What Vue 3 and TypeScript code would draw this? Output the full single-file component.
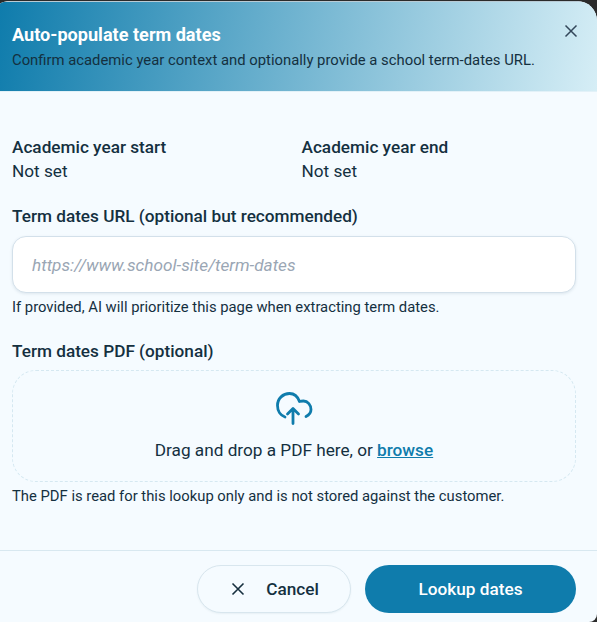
<script setup lang="ts">
const title = 'Auto-populate term dates'
</script>

<template>
  <div class="modal">
    <header class="head">
      <div>
        <h2>{{ title }}</h2>
        <p>Confirm academic year context and optionally provide a school term-dates URL.</p>
      </div>
      <button class="close" aria-label="Close">
        <svg width="16" height="16" viewBox="0 0 16 16"><path d="M2.5 2.5l11 11M13.5 2.5l-11 11" stroke="#33475a" stroke-width="1.5" fill="none" /></svg>
      </button>
    </header>
    <main class="body">
      <div class="years">
        <div><div class="label">Academic year start</div><div class="val">Not set</div></div>
        <div><div class="label">Academic year end</div><div class="val">Not set</div></div>
      </div>
      <div class="label url-label">Term dates URL (optional but recommended)</div>
      <input class="url" placeholder="https://www.school-site/term-dates" />
      <div class="hint">If provided, AI will prioritize this page when extracting term dates.</div>
      <div class="label pdf-label">Term dates PDF (optional)</div>
      <div class="drop">
        <svg class="cloud" width="38" height="34" viewBox="0 0 38 34" fill="none" stroke="#0f7cac" stroke-width="2.8" stroke-linecap="round" stroke-linejoin="round">
          <path d="M10 26C5.5 24.5 2.5 20 2.5 14.5C2.5 7.5 8 2.5 14.5 2.5C19 2.5 22.5 5 24.5 10.5C26 10 27.5 10 28.5 10C32.8 10 36 14 36 18.5C36 21.5 34 24 31 25.5" />
          <path d="M18 32.5V18M12.5 23L18 17.5L23.5 23" />
        </svg>
        <div class="drop-text">Drag and drop a PDF here, or <a href="#" @click.prevent>browse</a></div>
      </div>
      <div class="hint pdf-hint">The PDF is read for this lookup only and is not stored against the customer.</div>
    </main>
    <footer class="foot">
      <button class="btn cancel">
        <svg width="14" height="14" viewBox="0 0 14 14"><path d="M1.5 1.5l11 11M12.5 1.5l-11 11" stroke="#17303f" stroke-width="1.6" fill="none" /></svg>
        <span>Cancel</span>
      </button>
      <button class="btn go">Lookup dates</button>
    </footer>
  </div>
</template>

<style>
html, body { margin: 0; background: #2b2b2b; }
</style>

<style scoped>
* { box-sizing: border-box; }
.modal {
  width: 597px; height: 621px; margin-top: 1px; background: #f5fbff; border-radius: 12px 20px 8px 0 / 3px 20px 8px 0; overflow: hidden;
  font-family: Roboto, sans-serif; color: #14303f; display: flex; flex-direction: column;
}
.head {
  height: 91px; padding: 20px 18px 0 12px; display: flex; justify-content: space-between; align-items: flex-start;
  background: linear-gradient(100deg, #0f7cac 0%, #d6eef6 100%);
  border-top: 1px solid #b9cbd5;
  border-bottom: 1px solid #e2f1f8;
}
h2 { margin: 0; font-size: 18.1px; line-height: 26px; font-weight: 700; color: #fff; }
.head p { margin: 2px 0 0; font-size: 14.83px; line-height: 20px; color: #14303f; }
.close { border: 0; background: none; padding: 0; margin-top: 1px; width: 16px; height: 16px; }
.body { flex: 1; padding: 44px 21px 0 12px; }
.years { display: grid; grid-template-columns: 289.5px 1fr; }
.label { font-size: 17.2px; line-height: 22px; font-weight: 500; }
.val { font-size: 17.2px; line-height: 22px; margin-top: 2px; }
.url-label { margin-top: 23px; }
.url {
  display: block; width: 100%; height: 57px; margin-top: 9px; padding: 0 19px; border: 1px solid #d3e0ea; border-radius: 14px;
  background: #fff; font: italic 17.2px Roboto, sans-serif; box-shadow: 0 1px 3px rgba(20,60,90,.1); outline: none;
}
.url::placeholder { color: #9aa6b4; }
.hint { font-size: 14.8px; line-height: 20px; margin-top: 4px; }
.pdf-label { margin-top: 23px; }
.drop {
  height: 112px; margin-top: 8px; border: 1px dashed #d5e8f1; border-radius: 24px;
  display: flex; flex-direction: column; align-items: center; padding-top: 20px;
}
.cloud { display: block; }
.drop-text { font-size: 17.2px; line-height: 22px; margin-top: 14px; }
.drop-text a { color: #0f7cac; font-weight: 500; text-decoration: underline; }
.pdf-hint { margin-top: 4px; }
.foot {
  margin-top: auto; height: 72px; border-top: 1px solid #d8e8f0; padding: 14px 21px 0 0; display: flex; justify-content: flex-end; gap: 14px;
}
.btn { height: 48px; border-radius: 24px; font: 500 17.2px Roboto, sans-serif; }
.cancel { width: 154px; padding: 0 0 0 2px; background: #f5fbff; border: 1px solid #d8e6ee; color: #14303f; display: flex; align-items: center; justify-content: center; gap: 21px; box-shadow: 0 1px 2px rgba(20,60,90,.06); }
.go { width: 211px; background: #0f7cac; border: 0; color: #fff; }
</style>
